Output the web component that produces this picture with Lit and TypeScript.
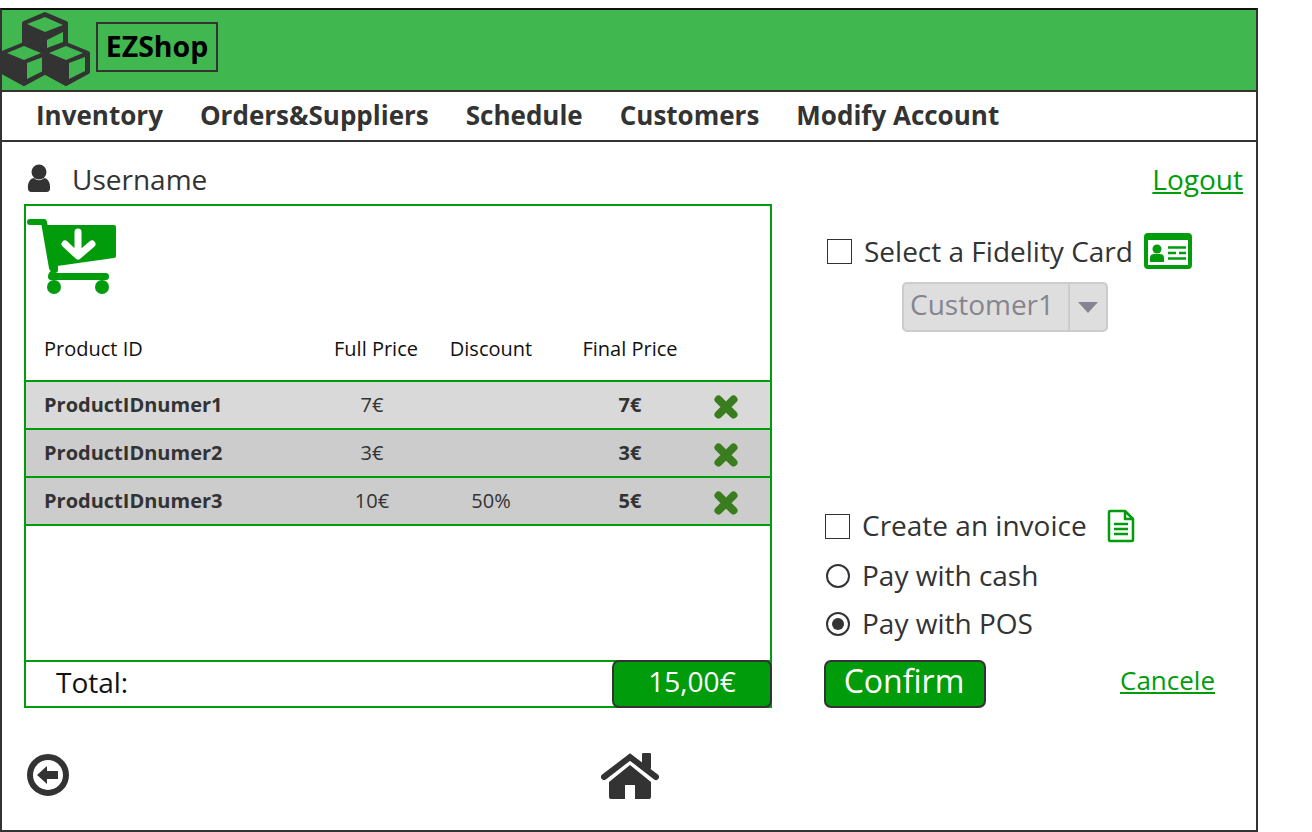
import { LitElement, html, css, svg } from 'lit';
import { customElement } from 'lit/decorators.js';

const rows = [
  { id: 'ProductIDnumer1', full: '7€', discount: '', final: '7€' },
  { id: 'ProductIDnumer2', full: '3€', discount: '', final: '3€' },
  { id: 'ProductIDnumer3', full: '10€', discount: '50%', final: '5€' }
];

const cube = (x: number) => svg`
  <path d="M${x} 44 L${x + 22} 53 V72 L${x} 84 L${x - 22} 72 V53 Z" fill="#333" stroke="#333" stroke-width="4" stroke-linejoin="round"/>
  <path d="M${x} 46 L${x + 17} 53 L${x} 60 L${x - 17} 53 Z" fill="#41b74f"/>
  <path d="M${x + 3} 63 L${x + 19} 57 V71 L${x + 3} 79 Z" fill="#41b74f"/>`;

@customElement('app-root')
export class AppRoot extends LitElement {
  static styles = css`
    :host {
      display: block;
      width: 1312px;
      height: 832px;
      background: #fff;
      font-family: 'Open Sans', sans-serif;
      color: #333;
      overflow: hidden;
    }

    .frame {
      box-sizing: border-box;
      width: 1258px;
      height: 824px;
      margin-top: 8px;
      border: 2px solid #333;
      border-top-color: #111;
      display: flex;
      flex-direction: column;
    }

    .header {
      box-sizing: border-box;
      height: 82px;
      flex: none;
      background: #41b74f;
      border-bottom: 2px solid #333;
      display: flex;
      align-items: flex-start;
    }

    .logo {
      display: block;
      margin-left: -2px;
      flex: none;
    }

    .brand {
      box-sizing: border-box;
      height: 50px;
      width: 122px;
      margin: 12px 0 0 4px;
      border: 2px solid #333;
      color: #000;
      font-size: 28.500px;
      font-weight: 700;
      line-height: 44px;
      text-align: center;
    }

    .nav {
      box-sizing: border-box;
      height: 50px;
      flex: none;
      border-bottom: 2px solid #333;
      display: flex;
      gap: 37px;
      padding: 0 0 2px 34px;
      align-items: center;
      font-size: 26px;
      font-weight: 700;
    }

    .main {
      flex: 1;
      display: flex;
      flex-direction: column;
      padding: 0 13px 0 22px;
    }

    .user-row {
      height: 62px;
      flex: none;
      display: flex;
      align-items: center;
      padding-top: 12px;
      box-sizing: border-box;
      font-size: 28px;
    }

    .user-row svg {
      margin: 0 21px 2px 3px;
    }

    .logout {
      margin-left: auto;
      color: #009c0c;
      text-decoration: underline;
    }

    .columns {
      display: flex;
      height: 504px;
      flex: none;
    }

    .cart {
      box-sizing: border-box;
      width: 748px;
      border: 2px solid #009c0c;
      display: flex;
      flex-direction: column;
    }

    .cart-top {
      height: 174px;
      flex: none;
      display: flex;
      flex-direction: column;
      justify-content: space-between;
      box-sizing: border-box;
    }

    .cart-top svg {
      display: block;
    }

    .cols {
      display: grid;
      grid-template-columns: 292px 116px 114px 164px 28px;
      align-items: center;
    }

    .cols > * {
      text-align: center;
    }

    .cols > :first-child {
      text-align: left;
      padding-left: 18px;
    }

    .head {
      height: 62px;
      box-sizing: border-box;
      padding-bottom: 1px;
      font-size: 20px;
      color: #111;
    }

    .row {
      height: 48px;
      box-sizing: border-box;
      border-top: 2px solid #009c0c;
      background: #ccc;
      font-size: 20px;
      padding-bottom: 2px;
    }

    .row.first {
      background: #d9d9d9;
    }

    .row b {
      font-weight: 700;
    }

    .row .full {
      padding-right: 8px;
    }

    .row svg {
      display: block;
      margin: 6px auto 0;
    }

    .empty {
      flex: 1;
      border-top: 2px solid #009c0c;
    }

    .total {
      height: 46px;
      flex: none;
      box-sizing: border-box;
      border-top: 2px solid #009c0c;
      display: flex;
      align-items: center;
      justify-content: space-between;
      padding-left: 30px;
      font-size: 28px;
      line-height: 38px;
      color: #111;
    }

    .total > span {
      padding-bottom: 4px;
    }

    .amount {
      box-sizing: border-box;
      width: 160px;
      height: 48px;
      margin: -2px -2px -2px 0;
      border: 2px solid #333;
      border-radius: 7px;
      background: #009c0c;
      color: #fff;
      font-size: 28px;
      line-height: 38px;
      text-align: center;
    }

    .side {
      flex: 1;
      display: flex;
      flex-direction: column;
      padding-left: 52px;
      font-size: 28px;
    }

    .opt {
      display: flex;
      align-items: center;
    }

    .opt > span {
      padding-bottom: 2px;
    }

    .fidelity {
      margin: 27px 0 0 3px;
      height: 40px;
    }

    .fidelity > span {
      padding-bottom: 0;
    }

    .check {
      box-sizing: border-box;
      width: 25px;
      height: 25px;
      flex: none;
      border: 1.500px solid #333;
      margin-right: 12px;
    }

    .fidelity svg {
      margin-left: 11px;
    }

    .select {
      box-sizing: border-box;
      width: 206px;
      height: 50px;
      margin: 11px 0 0 78px;
      border: 2px solid #ccc;
      border-radius: 5px;
      background: #dedede;
      color: #85858f;
      display: flex;
      align-items: center;
    }

    .select span {
      flex: 1;
      padding: 0 0 6px 6px;
    }

    .caret {
      width: 36px;
      height: 100%;
      flex: none;
      border-left: 2px solid #ccc;
      display: flex;
      align-items: center;
      justify-content: center;
    }

    .caret::after {
      content: '';
      border-left: 10px solid transparent;
      border-right: 10px solid transparent;
      border-top: 11px solid #85858f;
    }

    .invoice {
      margin: auto 0 2px 1px;
      height: 48px;
    }

    .invoice svg {
      margin-left: 20px;
    }

    .radio-row {
      height: 48px;
    }

    .radio {
      box-sizing: border-box;
      width: 24px;
      height: 24px;
      flex: none;
      margin: 0 12px 0 2px;
      border: 2px solid #333;
      border-radius: 50%;
      display: flex;
      align-items: center;
      justify-content: center;
    }

    .radio.on::after {
      content: '';
      width: 12px;
      height: 12px;
      border-radius: 50%;
      background: #333;
    }

    .actions {
      display: flex;
      align-items: center;
      margin-top: 12px;
      height: 48px;
      flex: none;
    }

    .confirm {
      box-sizing: border-box;
      width: 162px;
      height: 48px;
      padding-right: 2px;
      border: 2px solid #333;
      border-radius: 7px;
      background: #009c0c;
      color: #fff;
      font-size: 32px;
      line-height: 38px;
      text-align: center;
    }

    .cancel {
      margin-left: 134px;
      padding-bottom: 8px;
      color: #009c0c;
      font-size: 26px;
      text-decoration: underline;
    }

    .footer {
      flex: 1;
      display: flex;
      align-items: center;
      padding: 12px 0 0 3px;
      box-sizing: border-box;
    }

    .footer .home {
      margin: 2px 0 0 532px;
    }
  `;

  render() {
    return html`
      <div class="frame">
        <div class="header">
          <svg class="logo" width="92" height="80" viewBox="0 10 92 80">
            <path d="M45 14 L66 23 V50 L45 60 L24 50 V23 Z" fill="#333" stroke="#333" stroke-width="4" stroke-linejoin="round"/>
            <path d="M45 17 L63 25 L45 32 L27 24 Z" fill="#41b74f"/>
            <path d="M47 40 L63 32 V42 L47 48 Z" fill="#41b74f"/>
            ${cube(24)}
            ${cube(66)}
          </svg>
          <div class="brand">EZShop</div>
        </div>
        <div class="nav">
          <span>Inventory</span>
          <span>Orders&amp;Suppliers</span>
          <span>Schedule</span>
          <span>Customers</span>
          <span>Modify Account</span>
        </div>
        <div class="main">
          <div class="user-row">
            <svg width="24" height="28" viewBox="0 0 24 28" fill="#333">
              <circle cx="12" cy="8" r="7.5"/>
              <path d="M1 25 C0 17 5 14 7 14 C10 17 14 17 17 14 C19 14 24 17 23 25 C23 27 21 28 20 28 H4 C3 28 1 27 1 25 Z"/>
            </svg>
            <span>Username</span>
            <span class="logout">Logout</span>
          </div>
          <div class="columns">
            <div class="cart">
              <div class="cart-top">
                <svg width="100" height="100" viewBox="26 206 100 100">
                  <path d="M30 222 H44 L52 268" fill="none" stroke="#009c0c" stroke-width="6" stroke-linecap="round" stroke-linejoin="round"/>
                  <path d="M44 225 H114 Q116 225 116 227 V256 Q116 258 114 258 L50 267 Z" fill="#009c0c"/>
                  <path d="M50 266 H58 V270 Q58 273 55 273 H106 Q109 273 109 276.500 Q109 280 106 280 H51 Q48 280 48 276.500 Q48 273 51 271 Z" fill="#009c0c"/>
                  <circle cx="54" cy="287" r="7" fill="#009c0c"/>
                  <circle cx="102" cy="287" r="7" fill="#009c0c"/>
                  <path d="M78 232 V255 M65 244 L78 256 L92 244" fill="none" stroke="#fff" stroke-width="7" stroke-linecap="round" stroke-linejoin="round"/>
                </svg>
                <div class="cols head">
                  <span>Product ID</span><span>Full Price</span><span>Discount</span><span>Final Price</span><span></span>
                </div>
              </div>
              ${rows.map((r, i) => html`
                <div class="cols row ${i === 0 ? 'first' : ''}">
                  <b>${r.id}</b>
                  <span class="full">${r.full}</span>
                  <span>${r.discount}</span>
                  <b>${r.final}</b>
                  <svg width="24" height="24" viewBox="0 0 24 24">
                    <path d="M4.500 4.500 L19.500 19.500 M19.500 4.500 L4.500 19.500" stroke="#3a7d1e" stroke-width="8" stroke-linecap="round"/>
                  </svg>
                </div>
              `)}
              <div class="empty"></div>
              <div class="total">
                <span>Total:</span>
                <div class="amount">15,00€</div>
              </div>
            </div>
            <div class="side">
              <div class="opt fidelity">
                <div class="check"></div>
                <span>Select a Fidelity Card</span>
                <svg width="48" height="36" viewBox="0 0 48 36">
                  <rect x="2" y="2" width="44" height="32" rx="2" fill="none" stroke="#009c0c" stroke-width="4"/>
                  <rect x="2" y="2" width="44" height="5" fill="#009c0c"/>
                  <circle cx="13" cy="16" r="4.500" fill="#009c0c"/>
                  <path d="M6 29 V25 Q6 21 10 21 H16 Q20 21 20 25 V29 Z" fill="#009c0c"/>
                  <path d="M24 14.500 H42 M24 20 H32 M35 20 H42 M24 25.500 H42" stroke="#009c0c" stroke-width="2.500"/>
                </svg>
              </div>
              <div class="select">
                <span>Customer1</span>
                <div class="caret"></div>
              </div>
              <div class="opt invoice">
                <div class="check"></div>
                <span>Create an invoice</span>
                <svg width="28" height="34" viewBox="0 0 28 34">
                  <path d="M2 3 Q2 2 3 2 H18 L26 10 V31 Q26 32 25 32 H3 Q2 32 2 31 Z M18 2 V10 H26" fill="none" stroke="#009c0c" stroke-width="2.500" stroke-linejoin="round"/>
                  <path d="M7 15 H21 M7 20 H21 M7 25 H21" stroke="#009c0c" stroke-width="2.500"/>
                </svg>
              </div>
              <div class="opt radio-row"><div class="radio"></div><span>Pay with cash</span></div>
              <div class="opt radio-row"><div class="radio on"></div><span>Pay with POS</span></div>
              <div class="actions">
                <div class="confirm">Confirm</div>
                <span class="cancel">Cancele</span>
              </div>
            </div>
          </div>
          <div class="footer">
            <svg width="42" height="42" viewBox="0 0 42 42">
              <circle cx="21" cy="21" r="18" fill="none" stroke="#333" stroke-width="6"/>
              <path d="M10 21 L20 12 V17 H31 V25 H20 V30 Z" fill="#333"/>
            </svg>
            <svg class="home" width="58" height="46" viewBox="0 0 58 46" fill="#333">
              <path d="M3 24 L29 4 L55 24" fill="none" stroke="#333" stroke-width="6" stroke-linecap="round"/>
              <rect x="41" y="0" width="9" height="16" rx="1"/>
              <path d="M8 29 L29 12 L50 29 V44 Q50 46 48 46 H34 V32 H24 V46 H10 Q8 46 8 44 Z"/>
            </svg>
          </div>
        </div>
      </div>
    `;
  }
}
